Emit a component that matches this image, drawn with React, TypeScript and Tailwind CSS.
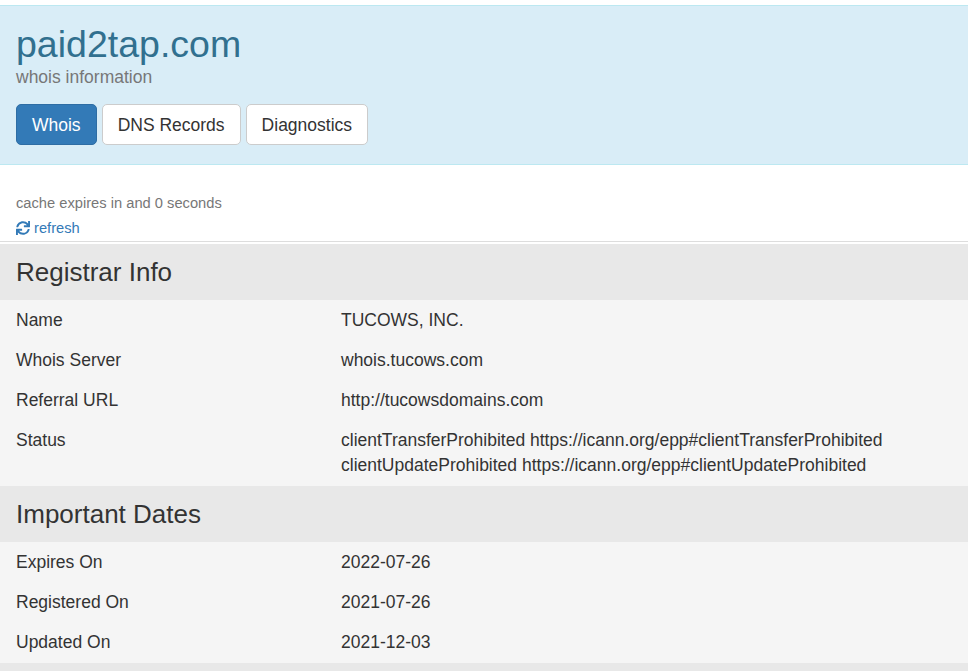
import { FaSync } from 'react-icons/fa';

const registrar: [string, string[]][] = [
  ['Name', ['TUCOWS, INC.']],
  ['Whois Server', ['whois.tucows.com']],
  ['Referral URL', ['http://tucowsdomains.com']],
  [
    'Status',
    [
      'clientTransferProhibited https://icann.org/epp#clientTransferProhibited',
      'clientUpdateProhibited https://icann.org/epp#clientUpdateProhibited',
    ],
  ],
];

const dates: [string, string[]][] = [
  ['Expires On', ['2022-07-26']],
  ['Registered On', ['2021-07-26']],
  ['Updated On', ['2021-12-03']],
];

function Section({ title, rows }: { title: string; rows: [string, string[]][] }) {
  return (
    <div>
      <div className="bg-[#e8e8e8] h-[56px] flex items-center px-4">
        <h2 className="text-[26px] text-[#333] leading-none">{title}</h2>
      </div>
      <div className="bg-[#f5f5f5] pb-[1px]">
        {rows.map(([label, values]) => (
          <div key={label} className="flex px-4 py-[7.5px] leading-[25px] text-[17.5px] text-[#333]">
            <div className="w-[325px] shrink-0">{label}</div>
            <div>
              {values.map(v => (
                <div key={v}>{v}</div>
              ))}
            </div>
          </div>
        ))}
      </div>
    </div>
  );
}

const btn = 'h-[41px] pt-[1px] px-[15px] rounded-[5px] border text-[17.5px]';

export default function App() {
  return (
    <div className="min-h-screen bg-white font-['Liberation_Sans',Arial,sans-serif]">
      <div className="pt-[5px]">
        <div className="bg-[#d9edf7] border-y border-[#bce8f1] px-4 pt-[18px] pb-[19px]">
          <h1 className="text-[37.5px] leading-[41px] text-[#31708f]">paid2tap.com</h1>
          <p className="text-[17.5px] leading-[24px] text-[#777]">whois information</p>
          <div className="flex gap-[5px] mt-[15px]">
            <button className={`${btn} bg-[#337ab7] border-[#2e6da4] text-white`}>Whois</button>
            <button className={`${btn} bg-white border-[#ccc] text-[#333]`}>DNS Records</button>
            <button className={`${btn} bg-white border-[#ccc] text-[#333]`}>Diagnostics</button>
          </div>
        </div>
      </div>

      <div className="px-4 pt-[28px] pb-[3px] text-[14.7px] leading-[20px]">
        <p className="text-[#777]">cache expires in and 0 seconds</p>
        <a className="flex items-center gap-[4px] mt-[5px] text-[#337ab7]">
          <FaSync className="w-[14px] h-[14px]" />
          refresh
        </a>
      </div>
      <div className="border-t border-[#ddd] mb-[2px]" />

      <Section title="Registrar Info" rows={registrar} />
      <Section title="Important Dates" rows={dates} />
      <div className="bg-[#e8e8e8] h-[56px]" />
    </div>
  );
}
